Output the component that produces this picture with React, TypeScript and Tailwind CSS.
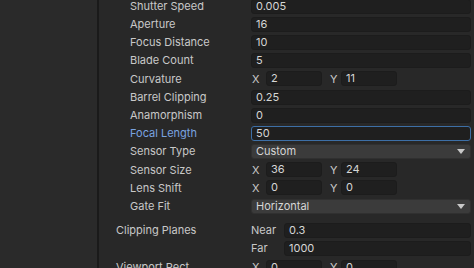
import React from "react";

const Label = ({ children, blue = false }: { children: React.ReactNode; blue?: boolean }) => (
  <div className={`pl-[31px] w-[152px] shrink-0 whitespace-nowrap ${blue ? "text-[#7aa3e0]" : "text-[#c8c8c8]"}`}>{children}</div>
);

const Field = ({ value, focus = false }: { value: string; focus?: boolean }) => (
  <div
    className={`flex-1 h-[15px] rounded-[3px] border ${focus ? "border-[#3d6fa6]" : "border-[#1c1c1c]"} bg-[#1f1f1f] text-[#d6d6d6] pl-[4px] flex items-center leading-none`}
  >
    {value}
  </div>
);

const Row = ({ children }: { children: React.ReactNode }) => (
  <div className="h-[18.2px] flex items-center">{children}</div>
);

const SmallField = ({ value }: { value: string }) => (
  <div className="w-[56px] h-[15px] rounded-[3px] border border-[#1c1c1c] bg-[#1f1f1f] text-[#d6d6d6] pl-[4px] flex items-center leading-none">
    {value}
  </div>
);

const Vec = ({ x, y }: { x: string; y: string }) => (
  <div className="flex-1 flex items-center">
    <span className="w-[15px] pl-[1px] text-[#c8c8c8]">X</span>
    <SmallField value={x} />
    <span className="w-[19px] pl-[8px] text-[#c8c8c8]">Y</span>
    <SmallField value={y} />
  </div>
);

const Dropdown = ({ value }: { value: string }) => (
  <div className="flex-1 h-[15px] rounded-[3px] bg-[#3b3b3b] border border-[#303030] text-[#d6d6d6] pl-[4px] pr-[5px] flex items-center justify-between leading-none">
    <span>{value}</span>
    <svg width="8" height="5" viewBox="0 0 8 5">
      <path d="M0 0 L8 0 L4 5 Z" fill="#c8c8c8" />
    </svg>
  </div>
);

export default function App() {
  return (
    <div
      className="w-[474px] h-[268px] overflow-hidden flex bg-[#282828] text-[11px]"
      style={{ fontFamily: "Inter, 'Noto Sans', sans-serif" }}
    >
      <div className="w-[97px] shrink-0 bg-[#2a2a2a]" />
      <div className="w-[2px] shrink-0 bg-[#1a1a1a]" />
      <div className="flex-1 min-w-0 pr-[3px]">
        <div className="mt-[-3px]">
          <Row><Label>Shutter Speed</Label><Field value="0.005" /></Row>
          <Row><Label>Aperture</Label><Field value="16" /></Row>
          <Row><Label>Focus Distance</Label><Field value="10" /></Row>
          <Row><Label>Blade Count</Label><Field value="5" /></Row>
          <Row><Label>Curvature</Label><Vec x="2" y="11" /></Row>
          <Row><Label>Barrel Clipping</Label><Field value="0.25" /></Row>
          <Row><Label>Anamorphism</Label><Field value="0" /></Row>
          <Row><Label blue>Focal Length</Label><Field value="50" focus /></Row>
          <Row><Label>Sensor Type</Label><Dropdown value="Custom" /></Row>
          <Row><Label>Sensor Size</Label><Vec x="36" y="24" /></Row>
          <Row><Label>Lens Shift</Label><Vec x="0" y="0" /></Row>
          <Row><Label>Gate Fit</Label><Dropdown value="Horizontal" /></Row>
          <div className="mt-[6px] flex">
            <div className="w-[152px] shrink-0 pl-[17px] h-[18.2px] flex items-center text-[#c8c8c8] whitespace-nowrap">Clipping Planes</div>
            <div className="flex-1">
              <Row><span className="w-[33px] text-[#c8c8c8]">Near</span><Field value="0.3" /></Row>
              <Row><span className="w-[33px] text-[#c8c8c8]">Far</span><Field value="1000" /></Row>
            </div>
          </div>
          <div className="mt-[1px] flex">
            <div className="w-[152px] shrink-0 pl-[17px] h-[18.2px] flex items-center text-[#c8c8c8] whitespace-nowrap">Viewport Rect</div>
            <div className="flex-1">
              <Row><Vec x="0" y="0" /></Row>
            </div>
          </div>
        </div>
      </div>
    </div>
  );
}
